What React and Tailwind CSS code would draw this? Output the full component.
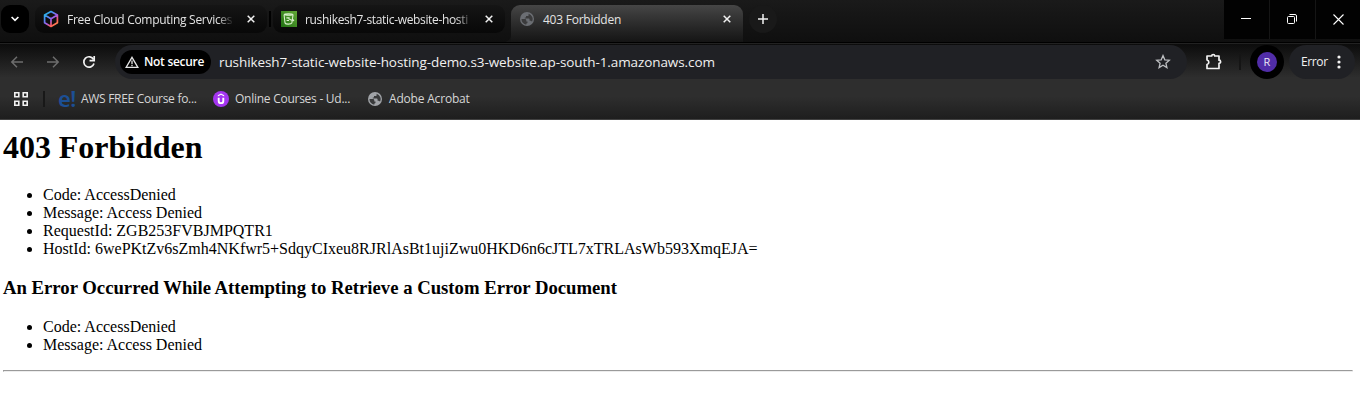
import React from "react";

const Close = () => (
  <svg width="8" height="8" viewBox="0 0 8 8" className="shrink-0">
    <path d="M.7.7l6.6 6.6M7.3.7L.7 7.3" stroke="#f2f2f2" strokeWidth="1.5" />
  </svg>
);

const Globe = ({ color, land }) => (
  <svg width="14" height="14" viewBox="0 0 14 14" className="shrink-0">
    <circle cx="7" cy="7" r="7" fill={color} />
    <path
      d="M1.5 7h3.2c1.2 0 1.6.6 1.6 1.6v.8h1.2v1.2c0 .6-.6 1-1.2 1v1.2A5.6 5.6 0 0 1 1.5 7zM8.6 1.7v1.2c0 .8-.5 1.2-1.3 1.2H6v1.3H4.8v1.1h3.5c1 0 1.3.5 1.3 1.2v1h.9c.7 0 1.2.4 1.5 1A5.6 5.6 0 0 0 8.6 1.7z"
      fill={land}
    />
  </svg>
);

const Cube = () => (
  <svg width="16" height="18" viewBox="0 0 16 18" className="shrink-0">
    <defs>
      <linearGradient id="cube" x1="0" y1="0" x2="0.75" y2="1">
        <stop offset="0" stopColor="#18c8e0" />
        <stop offset=".35" stopColor="#4d8cf5" />
        <stop offset=".6" stopColor="#a35ce8" />
        <stop offset=".85" stopColor="#ff5c5c" />
        <stop offset="1" stopColor="#ff8a4a" />
      </linearGradient>
    </defs>
    <path
      d="M8 1.5l6.400 3.600v7.600L8 16.400l-6.400-3.700V5.100zM1.600 5.100L8 8.800l6.400-3.700M8 8.800v7.600"
      fill="none"
      stroke="url(#cube)"
      strokeWidth="1.7"
      strokeLinejoin="round"
    />
  </svg>
);

const Bucket = () => (
  <svg width="16" height="16" viewBox="0 0 16 16" className="shrink-0">
    <defs>
      <linearGradient id="bucket" x1="0" y1="1" x2="1" y2="0">
        <stop offset="0" stopColor="#1f7012" />
        <stop offset="1" stopColor="#62a836" />
      </linearGradient>
    </defs>
    <rect width="16" height="16" fill="url(#bucket)" />
    <g fill="none" stroke="#d8efcb" strokeWidth="1.1">
      <path d="M3.200 3.500c0-.9 8.800-.9 8.800 0s-8.800.9-8.800 0z" />
      <path d="M3.100 4l.9 8c.5 1.500 6.200 1.500 6.800 0L12 4M7.300 7.400l3.800 2.100c1.900.7 2.300-.1.600-1.100" />
      <path d="M5.400 6.900h3.200M5.600 9.500h2.400" />
    </g>
  </svg>
);

function TabStrip() {
  return (
    <div className="flex h-[42px] items-start bg-linear-to-b from-[#1a1a1a] to-[#0f0f0f]">
      <div className="ml-px mt-[5px] flex h-7 w-7 items-center justify-center rounded-[9px] bg-black">
        <svg width="8" height="6" viewBox="0 0 8 6">
          <path d="M.6 1L4 4.400 7.400 1" fill="none" stroke="#fff" strokeWidth="1.6" />
        </svg>
      </div>
      <div className="ml-[6px] mt-[5px] flex h-7 w-[232px] items-center rounded-[9px] bg-linear-to-b from-[#151515] to-[#080808] pl-2">
        <Cube />
        <span className="ml-2 w-[167px] overflow-hidden mask-r-from-90% text-xs leading-[29px] tracking-[-0.29px] whitespace-nowrap text-[#e3e3e3]">
          Free Cloud Computing Services
        </span>
        <span className="ml-[13px] flex"><Close /></span>
      </div>
      <div className="ml-[2px] mt-[11px] h-4 w-[2px] bg-black" />
      <div className="ml-[2px] mt-[5px] flex h-7 w-[232px] items-center rounded-[9px] bg-linear-to-b from-[#151515] to-[#080808] pl-2">
        <Bucket />
        <span className="ml-2 w-[168px] overflow-hidden mask-r-from-90% text-xs leading-[29px] tracking-[-0.34px] whitespace-nowrap text-[#e3e3e3]">
          rushikesh7-static-website-hosti
        </span>
        <span className="ml-[12px] flex"><Close /></span>
      </div>
      <svg width="6" height="8" viewBox="0 0 6 8" className="mt-[34px]">
        <path d="M6 0v8H0C4 7 6 4 6 0z" fill="#151515" />
      </svg>
      <div className="mt-[5px] flex h-[37px] w-[232px] items-start rounded-t-[9px] bg-linear-to-b from-[#464646] to-[#151515] pl-[9px]">
        <span className="mt-[7px] flex"><Globe color="#6b6e73" land="#3b3b3c" /></span>
        <span className="ml-[9px] w-[182px] text-xs leading-[29px] tracking-[-0.24px] whitespace-nowrap text-[#e3e3e3]">
          403 Forbidden
        </span>
        <span className="-ml-[2px] mt-[10px] flex"><Close /></span>
      </div>
      <div className="ml-[6px] mt-[5px] flex h-7 w-7 items-center justify-center rounded-full bg-[#191919]">
        <svg width="10" height="10" viewBox="0 0 10 10">
          <path d="M5 0v10M0 5h10" stroke="#f2f2f2" strokeWidth="1.5" />
        </svg>
      </div>
      <div className="ml-auto flex h-[39px] w-[136px] gap-px bg-[#151515]">
        <div className="flex w-[45px] items-start bg-[#020202] pt-[18px] pl-[17px]">
          <div className="h-px w-[10px] bg-white" />
        </div>
        <div className="flex w-[45px] items-start bg-[#020202] pt-[14px] pl-[17px]">
          <svg width="10" height="10" viewBox="0 0 10 10" fill="none" stroke="#fff">
            <rect x=".5" y="2.500" width="7" height="7" rx="1" />
            <path d="M2.500.5H8A1.500 1.500 0 0 1 9.500 2v5.500" />
          </svg>
        </div>
        <div className="flex flex-1 items-start bg-[#020202] pt-[14px] pl-[17px]">
          <svg width="11" height="11" viewBox="0 0 11 11">
            <path d="M.5.5l10 10M10.500.5L.5 10.500" stroke="#fff" strokeWidth="1.1" />
          </svg>
        </div>
      </div>
    </div>
  );
}

function Toolbar() {
  return (
    <div className="flex h-[35px] items-center">
      <svg width="100" height="14" viewBox="0 0 100 14" fill="none" className="shrink-0">
        <path d="M23 7H12M17 1.800L11.800 7L17 12.200M47 7h11M53 1.800L58.200 7L53 12.200" stroke="#6d6d6d" strokeWidth="1.5" />
        <path d="M93.600 4.500A5.200 5.200 0 1 0 94 8.500" stroke="#f2f2f2" strokeWidth="1.7" />
        <path d="M94.200 1v4.700h-4.700" stroke="#f2f2f2" strokeWidth="1.700" />
      </svg>
      <div className="ml-[15px] flex h-[34px] w-[1072px] items-center rounded-full bg-[#202125] pl-[5px]">
        <div className="flex h-6 w-[91px] shrink-0 items-center rounded-full bg-black pl-[5px]">
          <svg width="14" height="12" viewBox="0 0 14 12" className="shrink-0">
            <path d="M7 1.300L12.900 11.300H1.100z" fill="none" stroke="#e3e3e3" strokeWidth="1.300" />
            <path d="M7 4.500v3.500M7 8.800v1.400" stroke="#e3e3e3" strokeWidth="1.300" />
          </svg>
          <span className="ml-[5px] text-xs leading-6 font-semibold tracking-[-0.3px] whitespace-nowrap text-white">
            Not secure
          </span>
        </div>
        <span className="ml-2 text-[13.5px] leading-[34px] tracking-[-0.09px] whitespace-nowrap text-[#f0f0f0]">
          rushikesh7-static-website-hosting-demo.s3-website.ap-south-1.amazonaws.com
        </span>
        <svg width="16" height="15" viewBox="0 0 16 15" className="mr-4 ml-auto shrink-0">
          <path
            d="M8 1.600l1.800 4.200 4.500.4-3.400 3 1 4.400L8 11.300l-3.900 2.300 1-4.400-3.400-3 4.500-.4z"
            fill="none"
            stroke="#bcbec1"
            strokeWidth="1.300"
          />
        </svg>
      </div>
      <svg width="17" height="17" viewBox="0 0 17 17" className="ml-[18px] shrink-0">
        <path
          d="M2 3h4.700a1.500 1.500 0 0 1 3 0H14v4.200a1.600 1.600 0 0 1 0 3.200v5.100H2v-4a2.300 2.300 0 0 0 0-4.500z"
          fill="none"
          stroke="#f2f2f2"
          strokeWidth="1.700"
          strokeLinejoin="round"
        />
      </svg>
      <div className="ml-[17px] h-4 w-[2px] bg-[#151515]" />
      <div className="ml-[9px] flex h-[34px] w-[34px] shrink-0 items-center justify-center rounded-full bg-black">
        <div className="h-5 w-5 rounded-full bg-[#512da8] text-center text-[11px] leading-5 text-[#ece6f6]">R</div>
      </div>
      <div className="ml-[5px] flex h-[34px] w-[66px] shrink-0 items-center rounded-full bg-[#202125] pl-3">
        <span className="w-[26px] text-xs tracking-[-0.38px] text-[#f2f2f2]">Error</span>
        <svg width="4" height="14" viewBox="0 0 4 14" fill="#f2f2f2" className="ml-[10px]">
          <circle cx="2" cy="2" r="1.600" />
          <circle cx="2" cy="7" r="1.600" />
          <circle cx="2" cy="12" r="1.600" />
        </svg>
      </div>
    </div>
  );
}

function Bookmarks() {
  return (
    <div className="flex h-[40px] items-center text-xs whitespace-nowrap text-[#d6d6d6]">
      <svg width="14" height="14" viewBox="0 0 14 14" fill="none" stroke="#f2f2f2" strokeWidth="1.600" className="ml-[14px] shrink-0">
        <path d="M.8.8h4v4h-4zM9.200.8h4v4h-4zM.8 9.200h4v4h-4zM9.200 9.200h4v4h-4z" />
      </svg>
      <div className="ml-[15px] h-4 w-[2px] bg-[#181818]" />
      <span className="mb-[3px] ml-[13px] w-[18px] font-['Noto_Sans'] text-[22px] leading-5 font-semibold tracking-[-0.5px] text-[#1c4f94]">
        e!
      </span>
      <span className="ml-[5px] w-[117px] tracking-[-0.29px]">AWS FREE Course fo...</span>
      <svg width="16" height="16" viewBox="0 0 16 16" className="ml-[15px] shrink-0">
        <circle cx="8" cy="8" r="8" fill="#a435f0" />
        <path d="M5.700 6.800v3.100c0 3 4.600 3 4.600 0V6.800" fill="none" stroke="#fff" strokeWidth="1.900" />
        <path d="M4.800 5.400V4.200L8 2.500l3.200 1.700v1.200L8 3.800z" fill="#fff" />
      </svg>
      <span className="ml-[6px] w-[117px] tracking-[-0.26px]">Online Courses - Ud...</span>
      <span className="ml-4 flex"><Globe color="#a0a3a7" land="#393a3b" /></span>
      <span className="ml-[7px] tracking-[-0.19px]">Adobe Acrobat</span>
    </div>
  );
}

export default function App() {
  return (
    <div className="h-[402px] w-[1360px] overflow-hidden bg-white font-['Open_Sans',sans-serif]">
      <TabStrip />
      <div className="h-px bg-black" />
      <div className="h-px bg-[#222222]" />
      <div className="h-[76px] border-b border-[#414141] bg-[linear-gradient(to_bottom,#0c0c0c,#2e2e2e_45%,#2e2e2e_70%,#1e1e1e)]">
        <Toolbar />
        <Bookmarks />
      </div>
      <main className="px-[3px] pt-[9px] font-['Liberation_Serif',serif] text-base leading-[18px] text-black">
        <h1 className="text-[32px] leading-9 font-bold tracking-[-0.05px]">403 Forbidden</h1>
        <ul className="mt-[21px] list-disc pl-10">
          <li>Code: AccessDenied</li>
          <li>Message: Access Denied</li>
          <li>RequestId: ZGB253FVBJMPQTR1</li>
          <li>HostId: 6wePKtZv6sZmh4NKfwr5+SdqyCIxeu8RJRlAsBt1ujiZwu0HKD6n6cJTL7xTRLAsWb593XmqEJA=</li>
        </ul>
        <h3 className="mt-[19px] text-[18.720px] leading-[22px] font-bold">
          An Error Occurred While Attempting to Retrieve a Custom Error Document
        </h3>
        <ul className="mt-[19px] list-disc pl-10">
          <li>Code: AccessDenied</li>
          <li>Message: Access Denied</li>
        </ul>
        <hr className="mt-4 mr-[4px] h-[2px] border border-t-[#9a9a9a] border-r-[#ededed] border-b-[#ededed] border-l-[#9a9a9a]" />
      </main>
    </div>
  );
}
